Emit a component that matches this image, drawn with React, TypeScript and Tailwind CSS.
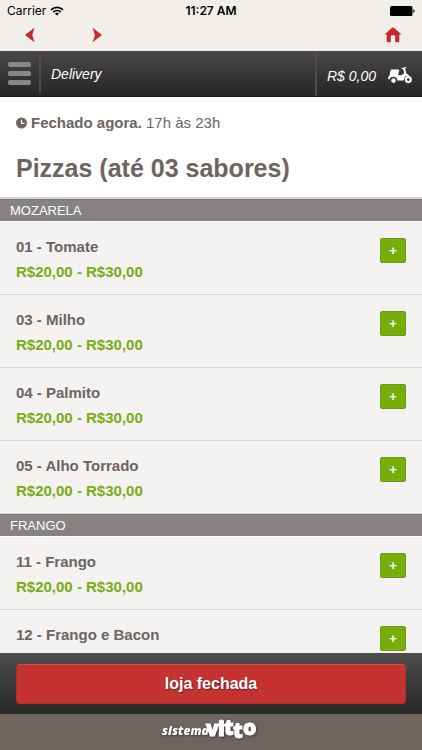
import React from 'react';

interface Item {
  name: string;
  price: string;
}

interface Section {
  title: string;
  items: Item[];
}

const price = 'R$20,00 - R$30,00';

const sections: Section[] = [
  {
    title: 'MOZARELA',
    items: [
      { name: '01 - Tomate', price },
      { name: '03 - Milho', price },
      { name: '04 - Palmito', price },
      { name: '05 - Alho Torrado', price },
    ],
  },
  {
    title: 'FRANGO',
    items: [
      { name: '11 - Frango', price },
      { name: '12 - Frango e Bacon', price },
    ],
  },
];

const StatusBar: React.FC = () => (
  <div className="grid h-[22px] grid-cols-3 items-center px-[7px] text-black">
    <div className="flex items-center gap-1 font-['Inter',sans-serif] text-xs">
      <span>Carrier</span>
      <svg width="14" height="10" viewBox="0 0 14 10" fill="none" stroke="currentColor" strokeWidth="1.7">
        <path d="M1 3.8C4.4.6 9.6.6 13 3.8" />
        <path d="M3.2 6C5.4 4 8.6 4 10.8 6" />
        <path d="M7 9.6 4.9 7.6c1.2-1.1 3-1.1 4.2 0z" fill="currentColor" stroke="none" />
      </svg>
    </div>
    <div className="text-center font-['Inter',sans-serif] text-xs font-semibold">11:27 AM</div>
    <div className="flex justify-end">
      <svg width="25" height="10" viewBox="0 0 25 10">
        <rect width="22.5" height="10" rx="1.5" fill="#000" />
        <path d="M23.3 3.2c1.8.5 1.8 3.1 0 3.6z" fill="#000" />
      </svg>
    </div>
  </div>
);

const NavBar: React.FC = () => (
  <nav className="flex h-[29px] items-start pr-5 pl-6 text-[#c5282d]">
    <button aria-label="Voltar" className="mt-[5px] flex h-4 w-3 items-center">
      <svg width="12" height="16" viewBox="0 0 12 16" fill="currentColor">
        <path d="M10.5.8 1 8l9.5 7.2L8.300 8z" />
      </svg>
    </button>
    <button aria-label="Avançar" className="mt-[5px] ml-14 flex h-4 w-3 items-center">
      <svg width="12" height="16" viewBox="0 0 12 16" fill="currentColor">
        <path d="M.5.800 10 8 .5 15.200 3 8z" />
      </svg>
    </button>
    <a href="#" aria-label="Início" className="mt-[5px] ml-auto">
      <svg width="18" height="16" viewBox="0 0 18 16" fill="currentColor">
        <path d="M9 .5c.6 0 1 .2 1.500.7L17.500 7.500H15.300V14.500c0 .5-.4.8-.8.8h-3.300V9.500c0-1-.4-1.300-1-1.300H7.800c-.6 0-1 .3-1 1.300v5.800H3.500c-.4 0-.8-.3-.8-.8V7.500H.5L7.500 1.200C8 .7 8.400.5 9 .5z" />
      </svg>
    </a>
  </nav>
);

const Scooter: React.FC = () => (
  <svg width="24" height="17" viewBox="0 0 24 17" fill="#fff">
    <path d="M3 2.500h7c1 0 1.300.6 1.100 1.400l-.8 3.400c-.1.600.2 1 .8 1h2.300L16.300 6l-1.200-4h-1.400V.8h2.500l.7-.8h1.500l-.6 1.500h-.9l1.400 4.700 3.100 2.600-1 .8-2-.9c-1.200.5-2 1.500-2.200 3.300-.1.900-.5 1.400-1.400 1.400H9.400c0-2.500-1.700-3.700-3.900-3.700-1.900 0-3.300.8-3.900 2.500H0c.1-2.400.9-3.800 2.300-4.400L1.600 7.300z" />
    <circle cx="5.500" cy="13.600" r="2.300" />
    <circle cx="20.300" cy="12.600" r="2.500" fill="none" stroke="#fff" strokeWidth="2.100" />
  </svg>
);

const Header: React.FC = () => (
  <header className="flex h-[46px] shrink-0 items-stretch border-b border-[#222021] bg-linear-to-b from-[#4a4848] to-[#272526] text-white italic">
    <button aria-label="Menu" className="my-1 flex w-[41px] flex-col justify-center gap-1 border-r-2 border-[#514b48] pl-2">
      <span className="h-[5px] w-[23px] rounded-xs bg-[#898888]" />
      <span className="h-[5px] w-[23px] rounded-xs bg-[#898888]" />
      <span className="h-[5px] w-[23px] rounded-xs bg-[#898888]" />
    </button>
    <div className="flex-1 pt-[13px] pl-[10px] text-sm leading-5">Delivery</div>
    <a href="#" className="flex items-center gap-3 border-l-2 border-[#514b48] pt-1 pr-[10px] pl-[10px] text-sm">
      <span>R$ 0,00</span>
      <Scooter />
    </a>
  </header>
);

const Row: React.FC<{ item: Item }> = ({ item }) => (
  <li className="flex h-[73px] items-start justify-between border-b border-[#dcd8d5] px-4 pt-3">
    <div className="text-[15px] leading-[25px] font-bold">
      <h3>{item.name}</h3>
      <p className="text-[#78ad15]">{item.price}</p>
    </div>
    <button
      aria-label={`Adicionar ${item.name}`}
      className="mt-1 h-[25px] w-[26px] rounded-xs border border-[#6b9c13] bg-[#78ad0c] text-[13px] leading-5 font-bold text-white"
    >
      +
    </button>
  </li>
);

const VittoLogo: React.FC = () => (
  <svg
    width="100"
    height="28"
    viewBox="0 0 100 28"
    fill="#fff"
    className="font-['Open_Sans',sans-serif] drop-shadow-[1px_1px_1px_#3d3734]"
  >
    <text x="1" y="17" fontSize="12" fontWeight="800" fontStyle="italic">sistema</text>
    <g fontSize="21" fontWeight="800" stroke="#fff" strokeWidth="1">
      <text x="45" y="18">v</text>
      <text x="57" y="18">i</text>
      <text x="63" y="17">t</text>
      <text x="72" y="20">t</text>
      <text x="82" y="17">o</text>
    </g>
  </svg>
);

const App: React.FC = () => {
  return (
    <div className="flex h-screen flex-col bg-[#f2eee9] font-['Liberation_Sans',Arial,sans-serif] text-[#6e6460]">
      <StatusBar />
      <NavBar />
      <Header />

      <main className="min-h-0 flex-1 overflow-hidden bg-[#f4f3f2]">
        <div className="h-[102px] border-b-2 border-[#d9d5d0] bg-white px-4 pt-4">
          <p className="flex items-center gap-1 text-[15px] leading-5">
            <svg width="11" height="12" viewBox="0 0 12 12">
              <circle cx="6" cy="6" r="6" fill="currentColor" />
              <path d="M6 2.500V6.500H9.200" fill="none" stroke="#fff" strokeWidth="1.300" />
            </svg>
            <span><strong>Fechado agora.</strong> 17h às 23h</span>
          </p>
          <h1 className="mt-[19px] text-[25px] leading-8 font-bold">Pizzas (até 03 sabores)</h1>
        </div>

        {sections.map((section) => (
          <section key={section.title}>
            <h2 className="h-[23px] border-t border-[#777371] border-b border-b-white bg-[#868281] px-[10px] text-[13px] leading-[22px] text-white">
              {section.title}
            </h2>
            <ul>
              {section.items.map((item) => (
                <Row key={item.name} item={item} />
              ))}
            </ul>
          </section>
        ))}
      </main>

      {/* Order bar */}
      <div className="shrink-0 bg-linear-to-b from-[#4c4c4c] to-[#282828] px-4 pt-[11px] pb-[10px]">
        <button className="h-10 w-full rounded-sm border border-[#b52c2c] border-t-[#d94b49] bg-[#c43232] text-base font-bold text-white text-shadow-[1px_1px_1px_#702020]">
          loja fechada
        </button>
      </div>
      <footer className="flex h-9 shrink-0 justify-center bg-[#6f6560]">
        <a href="#" aria-label="sistema vitto" className="mt-1 h-7">
          <VittoLogo />
        </a>
      </footer>
    </div>
  );
};

export default App;
